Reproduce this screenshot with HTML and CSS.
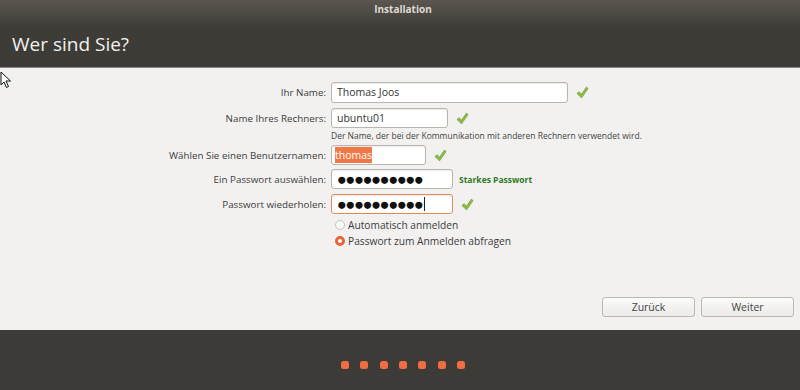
FILE: index.html
```html
<!DOCTYPE html>
<html lang="de">
  <head>
    <meta charset="UTF-8" />
    <title>Installation</title>
    <link rel="stylesheet" href="styles.css">
  </head>
  <body>
    <div class="header">
      <div class="titlebar">Installation</div>
      <h1>Wer sind Sie?</h1>
    </div>

    <div class="main">
      <svg class="pointer" width="12" height="18" viewBox="0 0 12 18">
        <path d="M1 1 L1 14 L4 11 L6.5 16.5 L8.5 15.5 L6 10 L10.5 10 Z" fill="#fff" stroke="#111" stroke-width="1" />
      </svg>

      <div class="form">
        <div class="row first">
          <label>Ihr Name:</label>
          <div class="field wide">Thomas Joos</div>
          <svg class="check" viewBox="0 0 14 14"><path d="M1 8 L3.5 6.2 L5.8 9 L11.2 1.2 L13 2.8 L6 12.8 Z" /></svg>
        </div>
        <div class="row">
          <label>Name Ihres Rechners:</label>
          <div class="field host">ubuntu01</div>
          <svg class="check" viewBox="0 0 14 14"><path d="M1 8 L3.5 6.2 L5.8 9 L11.2 1.2 L13 2.8 L6 12.8 Z" /></svg>
        </div>
        <div class="hint">Der Name, der bei der Kommunikation mit anderen Rechnern verwendet wird.</div>
        <div class="row">
          <label>Wählen Sie einen Benutzernamen:</label>
          <div class="field user"><span class="selected">thomas</span></div>
          <svg class="check" viewBox="0 0 14 14"><path d="M1 8 L3.5 6.2 L5.8 9 L11.2 1.2 L13 2.8 L6 12.8 Z" /></svg>
        </div>
        <div class="row">
          <label>Ein Passwort auswählen:</label>
          <div class="field pass dots">●●●●●●●●●●</div>
          <span class="strength">Starkes Passwort</span>
        </div>
        <div class="row last">
          <label>Passwort wiederholen:</label>
          <div class="field pass dots focus">●●●●●●●●●●<span class="caret"></span></div>
          <svg class="check" viewBox="0 0 14 14"><path d="M1 8 L3.5 6.2 L5.8 9 L11.2 1.2 L13 2.8 L6 12.8 Z" /></svg>
        </div>
        <div class="radio">
          <span class="dot"></span>
          Automatisch anmelden
        </div>
        <div class="radio">
          <span class="dot on"></span>
          Passwort zum Anmelden abfragen
        </div>
      </div>

      <div class="buttons">
        <button>Zurück</button>
        <button>Weiter</button>
      </div>
    </div>

    <div class="footer">
      <span></span><span></span><span></span><span></span><span></span><span></span><span></span>
    </div>
  </body>
</html>
```

FILE: styles.css
```css
* {
  margin: 0;
  padding: 0;
  box-sizing: border-box;
  font-family: "Open Sans", "Noto Sans", sans-serif;
}

body {
  width: 800px;
  height: 390px;
  background: #f2f1f0;
  overflow: hidden;
}

.header {
  height: 68px;
  background: linear-gradient(#5b574f, #3d3c37 28px, #3c3b37);
  border-bottom: 1px solid #8a8680;
}

.titlebar {
  height: 20px;
  line-height: 19px;
  text-align: center;
  color: #dfdbd2;
  font-size: 10px;
  font-weight: bold;
  padding-left: 6px;
}

h1 {
  font-weight: normal;
  color: #f2f1f0;
  font-size: 19px;
  padding: 11px 0 0 12px;
}

.main {
  position: relative;
  height: 262px;
  padding-top: 14px;
}

.pointer {
  position: absolute;
  left: 0;
  top: 3px;
}

.form {
  display: flex;
  flex-direction: column;
}

.row {
  display: flex;
  align-items: center;
  height: 20px;
  margin-bottom: 4px;
  font-size: 9.8px;
  color: #3c3c3c;
}

.row.first {
  height: 21px;
  margin-bottom: 5px;
}

.row.last {
  margin-top: 1px;
  margin-bottom: 3px;
}

.row label {
  width: 331px;
  padding-right: 5px;
  text-align: right;
}

.field {
  height: 100%;
  background: #fff;
  border: 1px solid #b9b5af;
  border-radius: 3px;
  box-shadow: inset 0 1px 1px rgba(0, 0, 0, 0.08);
  padding: 0 5px;
  line-height: 18px;
  font-size: 10.5px;
  color: #333;
}

.wide {
  width: 237px;
}

.host {
  width: 117px;
}

.user {
  width: 95px;
  padding-left: 3px;
}

.pass {
  width: 122px;
}

.dots {
  font-size: 16.5px;
  letter-spacing: -1.4px;
  color: #111;
  display: flex;
  align-items: center;
}

.focus {
  border-color: #e7855b;
}

.caret {
  display: inline-block;
  width: 1px;
  height: 14px;
  background: #222;
  margin-left: 1px;
}

.selected {
  background: #f07746;
  color: #fff;
  padding: 1px 0;
}

.check {
  width: 13px;
  height: 13px;
  margin-left: 8px;
  fill: #8cbd45;
  stroke: #6b9a33;
  stroke-width: 0.7;
  stroke-linejoin: round;
}

.strength {
  margin-left: 6px;
  font-size: 8.5px;
  font-weight: bold;
  color: #2d7a1e;
}

.hint {
  margin: -3px 0 0 331px;
  padding-top: 1px;
  font-size: 8.5px;
  color: #444;
  height: 16px;
}

.radio {
  display: flex;
  align-items: center;
  margin-left: 335px;
  height: 16px;
  font-size: 10.2px;
  color: #3c3c3c;
}

.radio .dot {
  width: 10px;
  height: 10px;
  border-radius: 50%;
  border: 1px solid #c8c4bf;
  background: #f7f7f6;
  margin-right: 3px;
}

.radio .dot.on {
  border: 3px solid #e9643a;
  background: #fff;
}

.buttons {
  display: flex;
  justify-content: flex-end;
  gap: 6px;
  padding: 48px 6px 0 0;
}

button {
  width: 93px;
  height: 20px;
  border: 1px solid #bdb8b2;
  border-radius: 3px;
  background: linear-gradient(#fbfbfa, #ebeae8);
  font-size: 10.5px;
  color: #444;
}

.footer {
  height: 60px;
  background: #3c3b37;
  display: flex;
  justify-content: center;
  align-items: center;
  gap: 11.3px;
  padding: 10px 0 0 6px;
}

.footer span {
  width: 8px;
  height: 8px;
  border-radius: 2.5px;
  background: #ee6e42;
}
```
